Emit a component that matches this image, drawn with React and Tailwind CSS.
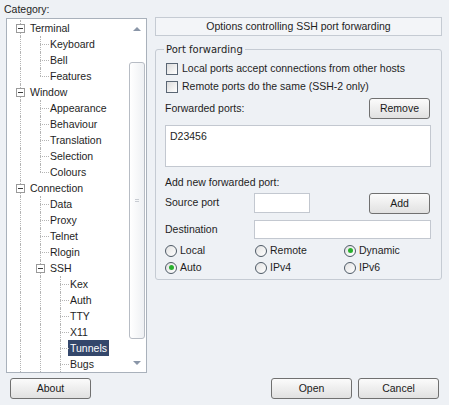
import React from 'react';

const FONT = { fontFamily: '"Liberation Sans", Arial, sans-serif' };

// guides per row: one entry per column up to the row's level
// 'v' = vertical line through, 'b' = branch stub with line through,
// 'l' = last branch (top half), 'e' = expander box
const TREE = [
  { label: 'Terminal', g: ['e'] },
  { label: 'Keyboard', g: ['v', 'b'] },
  { label: 'Bell', g: ['v', 'b'] },
  { label: 'Features', g: ['v', 'l'] },
  { label: 'Window', g: ['e'] },
  { label: 'Appearance', g: ['v', 'b'] },
  { label: 'Behaviour', g: ['v', 'b'] },
  { label: 'Translation', g: ['v', 'b'] },
  { label: 'Selection', g: ['v', 'b'] },
  { label: 'Colours', g: ['v', 'l'] },
  { label: 'Connection', g: ['e'] },
  { label: 'Data', g: ['v', 'b'] },
  { label: 'Proxy', g: ['v', 'b'] },
  { label: 'Telnet', g: ['v', 'b'] },
  { label: 'Rlogin', g: ['v', 'b'] },
  { label: 'SSH', g: ['v', 'e'] },
  { label: 'Kex', g: ['v', 'v', 'b'] },
  { label: 'Auth', g: ['v', 'v', 'b'] },
  { label: 'TTY', g: ['v', 'v', 'b'] },
  { label: 'X11', g: ['v', 'v', 'b'] },
  { label: 'Tunnels', g: ['v', 'v', 'b'], selected: true },
  { label: 'Bugs', g: ['v', 'v', 'b'] },
];

function Guide({ kind }) {
  return (
    <div className="relative w-[20px] h-full shrink-0">
      {(kind === 'v' || kind === 'b' || kind === 'e') && (
        <div className="absolute left-[10px] top-0 bottom-0 border-l border-dotted border-[#b4b4b4]" />
      )}
      {kind === 'l' && (
        <div className="absolute left-[10px] top-0 h-[8px] border-l border-dotted border-[#b4b4b4]" />
      )}
      {(kind === 'b' || kind === 'l') && (
        <div className="absolute left-[10px] right-[1px] top-[8px] border-t border-dotted border-[#b4b4b4]" />
      )}
      {kind === 'e' && (
        <div className="absolute left-[6px] top-[4px] w-[9px] h-[9px] border border-[#9a9a9a] bg-white flex items-center justify-center">
          <div className="w-[5px] h-px bg-[#3c3c3c]" />
        </div>
      )}
    </div>
  );
}

function Tree() {
  return (
    <div className="ml-[2px] w-[141px] h-[355px] border border-[#a9b1bb] bg-white flex">
      <div className="flex-1 pt-px pl-[3px] overflow-hidden">
        {TREE.map((r) => (
          <div key={r.label} className="flex h-[16px] items-stretch">
            {r.g.map((k, i) => (
              <Guide key={i} kind={k} />
            ))}
            <div className="flex items-center">
              <span
                className={`leading-[16px] px-[2px] -ml-[2px] ${
                  r.selected ? 'bg-[#34476b] text-white' : ''
                }`}
              >
                {r.label}
              </span>
            </div>
          </div>
        ))}
      </div>
      {/* scrollbar */}
      <div className="w-[18px] flex flex-col items-center">
        <div className="h-[17px] flex items-center justify-center pt-[2px]">
          <div className="w-0 h-0 border-l-[4px] border-r-[4px] border-b-[4px] border-l-transparent border-r-transparent border-b-[#8a96a8]" />
        </div>
        <div className="flex-1 w-full pt-[26px] pb-[17px] pl-px pr-px">
          <div className="h-full rounded-[3px] border border-[#b7bcc4] bg-linear-to-r from-white to-[#eef0f3] flex items-center justify-center">
            <div className="w-[4px] h-[3px] border-t border-b border-[#c8ccd2]" />
          </div>
        </div>
        <div className="h-[16px] flex items-center justify-center pb-[2px]">
          <div className="w-0 h-0 border-l-[4px] border-r-[4px] border-t-[4px] border-l-transparent border-r-transparent border-t-[#8a96a8]" />
        </div>
      </div>
    </div>
  );
}

function Button({ children, className = '' }) {
  return (
    <button
      className={`h-[21px] rounded-[3px] border border-[#707070] bg-linear-to-b from-[#fbfbfb] to-[#e1e1e1] text-[#1a1a1a] leading-none ${className}`}
    >
      {children}
    </button>
  );
}

function Check({ label }) {
  return (
    <div className="flex items-center h-[18px] pl-px">
      <div className="w-[12px] h-[12px] border border-[#5a6674] bg-linear-to-br from-[#dcdcdc] to-white mr-[4px]" />
      <span>{label}</span>
    </div>
  );
}

function Radio({ label, checked }) {
  return (
    <div className="flex items-center h-[17px]">
      <div className="w-[12px] h-[12px] rounded-full border border-[#4e5a66] bg-linear-to-br from-[#e2e2e2] to-white flex items-center justify-center mr-[3px]">
        {checked && <div className="w-[5px] h-[5px] rounded-full bg-[#28b02e]" />}
      </div>
      <span>{label}</span>
    </div>
  );
}

export default function App() {
  return (
    <div
      className="w-[449px] h-[405px] bg-[#eef1f5] text-[#1e1e1e] text-[10.5px] flex flex-col"
      style={FONT}
    >
      <div className="h-[378px] flex">
        {/* left: category tree */}
        <div className="pl-[4px] flex flex-col">
          <div className="h-[18px] pt-[2px] leading-[14px]">Category:</div>
          <Tree />
        </div>

        {/* right: options */}
        <div className="ml-[8px] w-[287px] pt-[17px] flex flex-col">
          <div className="h-[19px] border border-[#c5cbd3] bg-[#f3f5f8] flex items-center justify-center">
            Options controlling SSH port forwarding
          </div>

          <div className="relative mt-[13px] h-[231px] border border-[#c5cbd3] rounded-[3px] pl-[9px] pr-[10px] pt-[10px]">
            <span
              className="absolute -top-[7px] left-[8px] px-[2px] bg-[#eef1f5] text-[10px] leading-[13px]"
              style={{ fontFamily: '"DejaVu Sans", Verdana, sans-serif' }}
            >
              Port forwarding
            </span>

            <Check label="Local ports accept connections from other hosts" />
            <Check label="Remote ports do the same (SSH-2 only)" />

            <div className="mt-[2px] flex items-center">
              <span>Forwarded ports:</span>
              <Button className="ml-auto mr-px w-[61px] h-[20px]">Remove</Button>
            </div>

            <div className="mt-[6px] h-[42px] border border-[#c3c8d0] bg-white pl-[4px] pt-[3px] leading-[14px]">
              D23456
            </div>

            <div className="mt-[8px] h-[16px] flex items-center">Add new forwarded port:</div>

            <div className="mt-[2px] h-[20px] flex items-center">
              <span className="w-[89px]">Source port</span>
              <div className="w-[56px] h-[20px] border border-[#c3c8d0] bg-white" />
              <Button className="ml-auto mr-px w-[61px] h-[20px]">Add</Button>
            </div>

            <div className="mt-[7px] h-[19px] flex items-center">
              <span className="w-[89px]">Destination</span>
              <div className="flex-1 h-[19px] border border-[#c3c8d0] bg-white" />
            </div>

            <div className="mt-[3px] grid grid-cols-[90px_89px_1fr]">
              <Radio label="Local" />
              <Radio label="Remote" />
              <Radio label="Dynamic" checked />
              <Radio label="Auto" checked />
              <Radio label="IPv4" />
              <Radio label="IPv6" />
            </div>
          </div>
        </div>
      </div>

      <div className="h-[21px] flex">
        <Button className="ml-[10px] w-[81px]">About</Button>
        <Button className="ml-auto w-[81px]">Open</Button>
        <Button className="ml-[6px] mr-[10px] w-[81px]">Cancel</Button>
      </div>
    </div>
  );
}
